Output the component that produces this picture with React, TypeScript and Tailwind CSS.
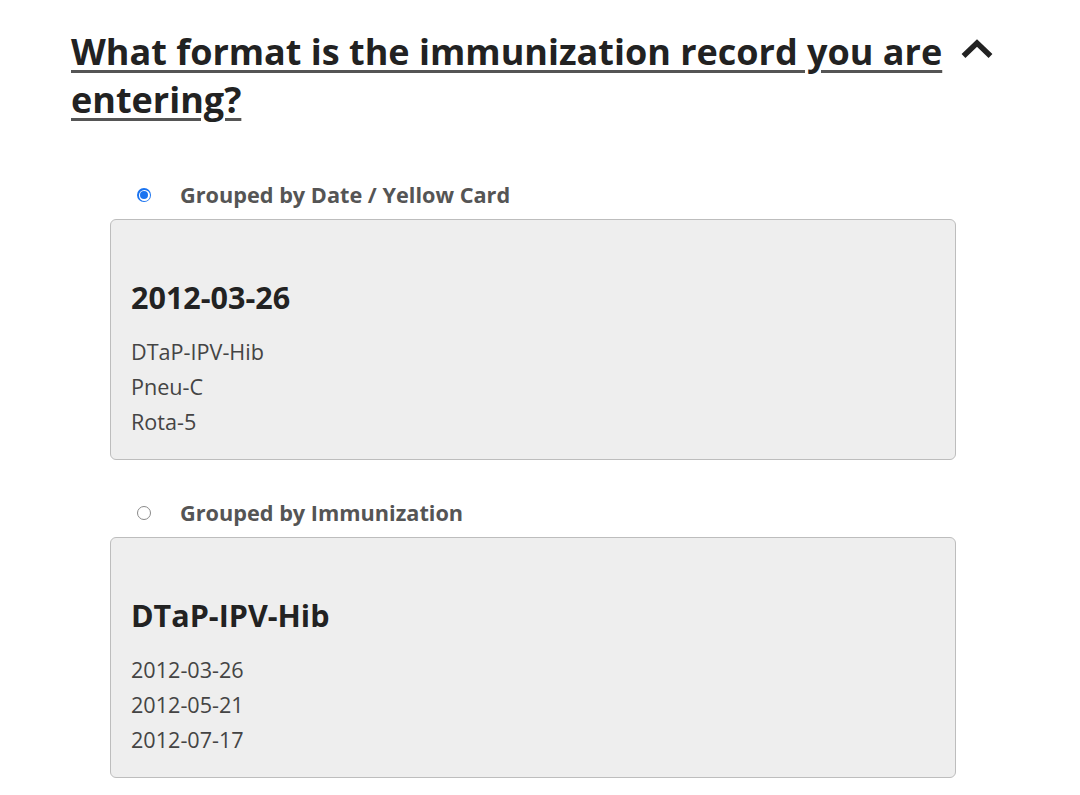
import React, { useState } from 'react';

type Option = {
  id: string;
  label: string;
  heading: string;
  items: string[];
};

const options: Option[] = [
  {
    id: 'date',
    label: 'Grouped by Date / Yellow Card',
    heading: '2012-03-26',
    items: ['DTaP-IPV-Hib', 'Pneu-C', 'Rota-5'],
  },
  {
    id: 'immunization',
    label: 'Grouped by Immunization',
    heading: 'DTaP-IPV-Hib',
    items: ['2012-03-26', '2012-05-21', '2012-07-17'],
  },
];

const Radio: React.FC<{ checked: boolean }> = ({ checked }) =>
  checked ? (
    <span className="flex h-[14px] w-[14px] items-center justify-center rounded-full bg-[#1a73f0]">
      <span className="flex h-[11px] w-[11px] items-center justify-center rounded-full bg-white">
        <span className="h-[8px] w-[8px] rounded-full bg-[#1a73f0]" />
      </span>
    </span>
  ) : (
    <span className="h-[14px] w-[14px] rounded-full border border-[#8a8a8a] bg-white" />
  );

const App: React.FC = () => {
  const [selected, setSelected] = useState('date');

  return (
    <div className="min-h-screen bg-white font-['Open_Sans',sans-serif] text-[#222]">
      <main className="pl-[71px] pt-[28px]">
        {/* Question header */}
        <div className="flex items-start">
          <h2 className="w-[880px] text-[36px] font-bold leading-[48px] text-[#222] underline decoration-[#555] decoration-[3px] underline-offset-[5px]">
            What format is the immunization record you are entering?
          </h2>
          <svg width="34" height="22" viewBox="0 0 34 22" className="ml-[9px] mt-[10px]">
            <path d="M3.5 18 L17 5 L30.5 18" fill="none" stroke="#222" strokeWidth="5.5" strokeLinejoin="miter" />
          </svg>
        </div>

        {/* Format options */}
        <div className="ml-[39px] mt-[56px] w-[846px]">
          {options.map((opt, i) => (
            <div key={opt.id} className={i > 0 ? 'mt-[38px]' : ''}>
              <label
                className="flex cursor-pointer items-center pl-[27px]"
                onClick={() => setSelected(opt.id)}
              >
                <Radio checked={selected === opt.id} />
                <span className="ml-[29px] text-[21.7px] font-bold leading-[30px] text-[#555]">
                  {opt.label}
                </span>
              </label>
              <div className="mt-[9px] rounded-[6px] border border-[#bdbdbd] bg-[#eeeeee] px-[20px] pt-[56px] pb-[20px]">
                <h3 className="text-[30.5px] font-bold leading-[42px] text-[#222]">{opt.heading}</h3>
                <ul className="mt-[16px]">
                  {opt.items.map((item) => (
                    <li key={item} className="text-[21.6px] leading-[35px] text-[#444]">
                      {item}
                    </li>
                  ))}
                </ul>
              </div>
            </div>
          ))}
        </div>
      </main>
    </div>
  );
};

export default App;
